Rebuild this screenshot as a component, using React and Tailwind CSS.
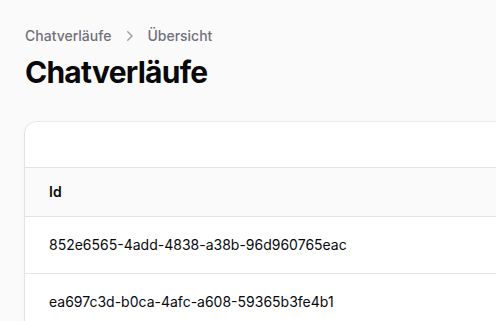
export default function App() {
  const rows = [
    '852e6565-4add-4838-a38b-96d960765eac',
    'ea697c3d-b0ca-4afc-a608-59365b3fe4b1',
  ]

  return (
    <div className="h-[321px] w-[496px] overflow-hidden bg-[#fafafa] font-['Inter',sans-serif] text-[#09090b]">
      <div className="flex flex-col gap-8 pl-[25px] pt-[26px]">
        <header className="flex flex-col gap-2">
          <nav className="flex items-center gap-2 text-sm font-medium text-[#71717a]">
            <span>Chatverläufe</span>
            <svg viewBox="0 0 20 20" fill="currentColor" className="h-5 w-5 text-[#a1a1aa]">
              <path
                fillRule="evenodd"
                d="M8.22 5.22a.75.75 0 0 1 1.06 0l4.25 4.25a.75.75 0 0 1 0 1.06l-4.25 4.25a.75.75 0 0 1-1.06-1.06L11.94 10 8.22 6.28a.75.75 0 0 1 0-1.06Z"
                clipRule="evenodd"
              />
            </svg>
            <span>Übersicht</span>
          </nav>
          <h1 className="text-3xl font-bold tracking-tight">Chatverläufe</h1>
        </header>

        <div className="w-[600px] rounded-xl bg-white shadow-sm ring-1 ring-[#09090b]/5">
          <div className="h-[46px] border-b border-[#e4e4e7]" />
          <div className="flex h-[49px] items-center border-b border-[#e4e4e7] bg-[#fafafa] pl-6 text-sm font-semibold">
            Id
          </div>
          {rows.map((id) => (
            <div key={id} className="flex h-[57px] items-center border-b border-[#e4e4e7] pl-6 text-sm">
              {id}
            </div>
          ))}
        </div>
      </div>
    </div>
  )
}
